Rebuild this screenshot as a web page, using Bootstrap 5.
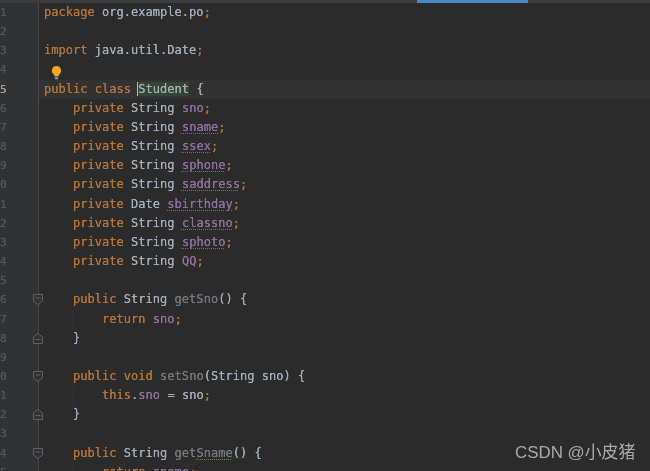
<!DOCTYPE html>
<html lang="en"><head><meta charset="utf-8"><title>Student.java</title>
<link href="https://cdn.jsdelivr.net/npm/bootstrap@5.3.0/dist/css/bootstrap.min.css" rel="stylesheet">
<style>
html,body{height:471px;overflow:hidden;background:#2b2b2b}
.ide{position:relative;width:650px;height:471px;overflow:hidden;background:#2b2b2b}
.blurwrap{filter:blur(.5px)}
.tabstrip{height:3px;background:#3a3c3e}
.tabfill{width:417px}
.tabactive{width:111px;background:#4a88c7}
.ln{height:19.17px;line-height:19.17px;font-family:"DejaVu Sans Mono",monospace;font-size:12px;letter-spacing:.03px;white-space:pre;color:#a3b0bd;text-shadow:0 0 .4px currentColor}
.gut{position:relative;flex:0 0 39px;background:#303234;border-right:1px solid #46484a;color:#5a5d60}
.num{display:block;width:6px;text-align:right;overflow:hidden;font-size:11px;color:#55585b}
.cur .num{color:#a4a3a3}
.src{flex:1;padding-left:5px}
.cur .src{background:#323232}
.k{color:#b8763a}.v{color:#91729f}.u{color:#767a7e}
.w{text-decoration:underline dotted #5f8a4a 1px;text-underline-offset:2px}
.hl{background:#344534;box-shadow:-1px 0 0 #bbb}
.fold{position:absolute;left:32px;top:3px;width:12px;height:13px}
.guide{display:inline-block;width:0;border-left:1px solid #363636;margin-right:-1px;height:19.17px;vertical-align:top}
.bulb{position:absolute;left:50px;top:65px;width:13px;height:15px}
.stamp{position:absolute;left:515px;top:442px;font-family:"Liberation Sans","Noto Sans CJK SC",sans-serif;font-size:16.9px;line-height:22px;color:#ababab;white-space:nowrap;filter:blur(.3px)}
</style></head>
<body>
<div class="ide">
<div class="blurwrap">
<div class="tabstrip d-flex"><div class="tabfill"></div><div class="tabactive"></div></div>
<div class="ln d-flex"><div class="gut"><span class="num">1</span></div><div class="src"><span class="k">package</span> org.example.po<span class="k">;</span></div></div>
<div class="ln d-flex"><div class="gut"><span class="num">2</span></div><div class="src"></div></div>
<div class="ln d-flex"><div class="gut"><span class="num">3</span></div><div class="src"><span class="k">import</span> java.util.Date<span class="k">;</span></div></div>
<div class="ln d-flex"><div class="gut"><span class="num">4</span></div><div class="src"></div></div>
<div class="ln d-flex cur"><div class="gut"><span class="num">5</span></div><div class="src"><span class="k">public class</span> <span class="hl">Student</span> {</div></div>
<div class="ln d-flex"><div class="gut"><span class="num">6</span></div><div class="src">    <span class="k">private</span> String <span class="v">sno</span><span class="k">;</span></div></div>
<div class="ln d-flex"><div class="gut"><span class="num">7</span></div><div class="src">    <span class="k">private</span> String <span class="v w">sname</span><span class="k">;</span></div></div>
<div class="ln d-flex"><div class="gut"><span class="num">8</span></div><div class="src">    <span class="k">private</span> String <span class="v w">ssex</span><span class="k">;</span></div></div>
<div class="ln d-flex"><div class="gut"><span class="num">9</span></div><div class="src">    <span class="k">private</span> String <span class="v w">sphone</span><span class="k">;</span></div></div>
<div class="ln d-flex"><div class="gut"><span class="num">0</span></div><div class="src">    <span class="k">private</span> String <span class="v w">saddress</span><span class="k">;</span></div></div>
<div class="ln d-flex"><div class="gut"><span class="num">1</span></div><div class="src">    <span class="k">private</span> Date <span class="v w">sbirthday</span><span class="k">;</span></div></div>
<div class="ln d-flex"><div class="gut"><span class="num">2</span></div><div class="src">    <span class="k">private</span> String <span class="v w">classno</span><span class="k">;</span></div></div>
<div class="ln d-flex"><div class="gut"><span class="num">3</span></div><div class="src">    <span class="k">private</span> String <span class="v w">sphoto</span><span class="k">;</span></div></div>
<div class="ln d-flex"><div class="gut"><span class="num">4</span></div><div class="src">    <span class="k">private</span> String <span class="v">QQ</span><span class="k">;</span></div></div>
<div class="ln d-flex"><div class="gut"><span class="num">5</span></div><div class="src"></div></div>
<div class="ln d-flex"><div class="gut"><span class="num">6</span><svg class="fold" viewBox="0 0 12 13"><path d="M1.5 1.5h9v6.5l-4.5 3.5-4.500-3.500z" fill="#2f3133" stroke="#5f6265"/><path d="M3.500 5h5" stroke="#5f6265"/></svg></div><div class="src">    <span class="k">public</span> String <span class="u">getSno</span>() {</div></div>
<div class="ln d-flex"><div class="gut"><span class="num">7</span></div><div class="src">    <span class="guide"></span>    <span class="k">return</span> <span class="v">sno</span><span class="k">;</span></div></div>
<div class="ln d-flex"><div class="gut"><span class="num">8</span><svg class="fold" viewBox="0 0 12 13"><path d="M1.5 11.5h9v-6.5l-4.5-3.5-4.500 3.500z" fill="#2f3133" stroke="#5f6265"/><path d="M3.500 7.500h5" stroke="#5f6265"/></svg></div><div class="src">    }</div></div>
<div class="ln d-flex"><div class="gut"><span class="num">9</span></div><div class="src"></div></div>
<div class="ln d-flex"><div class="gut"><span class="num">0</span><svg class="fold" viewBox="0 0 12 13"><path d="M1.5 1.5h9v6.5l-4.5 3.5-4.500-3.500z" fill="#2f3133" stroke="#5f6265"/><path d="M3.500 5h5" stroke="#5f6265"/></svg></div><div class="src">    <span class="k">public void</span> <span class="u">setSno</span>(String sno) {</div></div>
<div class="ln d-flex"><div class="gut"><span class="num">1</span></div><div class="src">    <span class="guide"></span>    <span class="k">this</span>.<span class="v">sno</span> = sno<span class="k">;</span></div></div>
<div class="ln d-flex"><div class="gut"><span class="num">2</span><svg class="fold" viewBox="0 0 12 13"><path d="M1.5 11.5h9v-6.5l-4.5-3.5-4.500 3.500z" fill="#2f3133" stroke="#5f6265"/><path d="M3.500 7.500h5" stroke="#5f6265"/></svg></div><div class="src">    }</div></div>
<div class="ln d-flex"><div class="gut"><span class="num">3</span></div><div class="src"></div></div>
<div class="ln d-flex"><div class="gut"><span class="num">4</span><svg class="fold" viewBox="0 0 12 13"><path d="M1.5 1.5h9v6.5l-4.5 3.5-4.500-3.500z" fill="#2f3133" stroke="#5f6265"/><path d="M3.500 5h5" stroke="#5f6265"/></svg></div><div class="src">    <span class="k">public</span> String <span class="u">get<span class="w">Sname</span></span>() {</div></div>
<div class="ln d-flex"><div class="gut"><span class="num">5</span></div><div class="src">    <span class="guide"></span>    <span class="k">return</span> <span class="v">sname</span><span class="k">;</span></div></div>
<svg class="bulb" viewBox="0 0 13 15"><path d="M6.500 1a4.700 4.700 0 0 0-2.800 8.400c.5.400.8.900.8 1.600h4c0-.7.3-1.200.8-1.600A4.700 4.700 0 0 0 6.500 1z" fill="#f5a623"/><path d="M4.600 12h3.800M5 13.700h3" stroke="#a9a9a9" stroke-width="1.200"/></svg>
</div>
<div class="stamp">CSDN @小皮猪</div>
</div>
<script src="https://cdn.jsdelivr.net/npm/bootstrap@5.3.0/dist/js/bootstrap.bundle.min.js"></script>
</body></html>
